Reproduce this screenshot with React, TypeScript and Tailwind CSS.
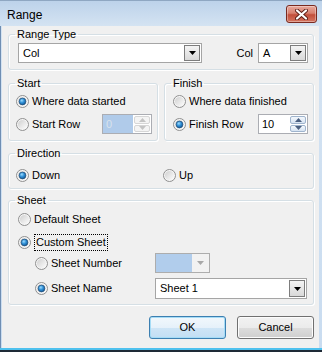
import React from "react";

function Radio({ checked }: { checked?: boolean }) {
  return (
    <svg width="13" height="13" viewBox="0 0 13 13" className="shrink-0">
      <defs>
        <linearGradient id="rbg" x1="0" y1="0" x2="1" y2="1">
          <stop offset="0" stopColor="#cfcfcf" />
          <stop offset="1" stopColor="#fdfdfd" />
        </linearGradient>
        <radialGradient id="rdot" cx="0.4" cy="0.35" r="0.75">
          <stop offset="0" stopColor="#9cdcff" />
          <stop offset="0.45" stopColor="#2f8fd6" />
          <stop offset="1" stopColor="#0b4a86" />
        </radialGradient>
      </defs>
      <circle cx="6.5" cy="6.5" r="6" fill="#f6f6f6" stroke="#8f8f8f" />
      <circle cx="6.5" cy="6.5" r="4.6" fill="url(#rbg)" />
      {checked && <circle cx="6.5" cy="6.5" r="3.4" fill="url(#rdot)" stroke="#244f78" strokeWidth="0.7" />}
    </svg>
  );
}

function Arrow({ disabled }: { disabled?: boolean }) {
  return (
    <svg width="7" height="4" viewBox="0 0 7 4">
      <path d="M0 0H7L3.5 4Z" fill={disabled ? "#a8a8a8" : "#000"} />
    </svg>
  );
}

function Combo({ text, className, disabled }: { text: string; className: string; disabled?: boolean }) {
  return (
    <div className={`flex border ${disabled ? "border-[#adadad] bg-[#f0f0f0]" : "border-[#a5a5a5] bg-white p-[1px]"} ${className}`}>
      <div className={`flex flex-1 items-center pl-[3px] ${disabled ? "bg-[#b1cdec]" : ""}`}>{text}</div>
      {disabled ? (
        <div className="flex w-[17px] items-center justify-center bg-[#f2f2f2]">
          <Arrow disabled />
        </div>
      ) : (
        <div className="flex w-[16px] items-center justify-center border border-[#7d7d7d] bg-[linear-gradient(to_bottom,#f4f4f4,#d9d9d9)]">
          <Arrow />
        </div>
      )}
    </div>
  );
}

function SpinArrow({ up, disabled }: { up?: boolean; disabled?: boolean }) {
  return (
    <svg width="7" height="4" viewBox="0 0 7 4">
      <path d={up ? "M0 4H7L3.5 0Z" : "M0 0H7L3.5 4Z"} fill={disabled ? "#c4c4c4" : "#4a5f80"} />
    </svg>
  );
}

function Spin({ value, disabled }: { value: string; disabled?: boolean }) {
  return (
    <div className="flex h-[20px] w-[50px] border border-[#abadb3] bg-white">
      <div className={`flex flex-1 items-center pl-[3px] ${disabled ? "bg-[#b0cbea] text-[#d9e2ec]" : ""}`}>{value}</div>
      <div className="flex w-[18px] flex-col gap-[1px] p-[1px]">
        <div
          className={`flex flex-1 items-center justify-center rounded-[2px] border ${
            disabled ? "border-[#d6d6d6] bg-[#f4f4f4]" : "border-[#9fb4cd] bg-[linear-gradient(to_bottom,#f4f8fc,#d6e3f2)]"
          }`}
        >
          <SpinArrow up disabled={disabled} />
        </div>
        <div
          className={`flex flex-1 items-center justify-center rounded-[2px] border ${
            disabled ? "border-[#d6d6d6] bg-[#f4f4f4]" : "border-[#9fb4cd] bg-[linear-gradient(to_bottom,#f4f8fc,#d6e3f2)]"
          }`}
        >
          <SpinArrow disabled={disabled} />
        </div>
      </div>
    </div>
  );
}

function Group({
  title,
  className,
  inner,
  children,
}: {
  title: string;
  className: string;
  inner: string;
  children: React.ReactNode;
}) {
  return (
    <fieldset className={`rounded-[3px] border border-[#d5dfe5] shadow-[inset_1px_1px_0_#ffffff,1px_1px_0_#ffffff] ${className}`}>
      <legend className="ml-[6px] px-[2px] leading-[13px]">{title}</legend>
      <div className={inner}>{children}</div>
    </fieldset>
  );
}

function Option({ checked, label, focus }: { checked?: boolean; label: string; focus?: boolean }) {
  return (
    <div className="flex items-center gap-[3px]">
      <Radio checked={checked} />
      <span className={focus ? "border border-dotted border-black px-[1px] leading-[15px]" : ""}>{label}</span>
    </div>
  );
}

export default function App() {
  return (
    <div className="flex h-[352px] w-[322px] flex-col overflow-hidden bg-[linear-gradient(to_bottom,#bcd2ea,#d4e3f2_26px,#c9dcf0)] font-['Liberation_Sans',Arial,sans-serif] text-[11px] leading-[13px] text-black">
      <div className="flex h-[26px] shrink-0 items-start justify-between border-t border-[#8fa7c2] pl-[7px] pr-[5px]">
        <span className="pt-[7px] text-[12px] leading-[14px]">Range</span>
        <div className="mt-[4px] flex h-[18px] w-[31px] items-center justify-center rounded-[3px] border border-[#7a2a20] bg-[linear-gradient(to_bottom,#e7a99d,#d8806f_45%,#c24e3b_55%,#d47560)] shadow-[inset_0_0_0_1px_rgba(255,255,255,0.35)]">
          <svg width="13" height="11" viewBox="0 0 13 11">
            <path d="M2 1.5L11 9.5M11 1.5L2 9.5" stroke="#5a1d16" strokeWidth="4" strokeLinecap="round" />
            <path d="M2 1.5L11 9.5M11 1.5L2 9.5" stroke="#ffffff" strokeWidth="2.2" strokeLinecap="round" />
          </svg>
        </div>
      </div>
      <div className="flex flex-1 border-l border-[#6f8eb3] pl-[1px] pr-[4px]">
        <div className="flex flex-1 flex-col bg-[#f0f0f0] pl-[6px] pr-[5px] pt-[2px]">
          <Group title="Range Type" className="h-[42px] w-[306px] pb-[6px] pt-[2px]" inner="pl-[9px] pr-[5px]">
            <div className="flex h-[20px] items-center justify-between">
              <Combo text="Col" className="h-[20px] w-[184px]" />
              <div className="flex items-center gap-[5px]">
                <span>Col</span>
                <Combo text="A" className="h-[20px] w-[50px]" />
              </div>
            </div>
          </Group>
          <div className="mt-[7px] flex gap-[6px]">
            <Group title="Start" className="h-[64px] w-[150px] pb-[6px] pt-[2px]" inner="pl-[7px] pr-[5px]">
              <div className="flex h-[18px] items-center">
                <Option checked label="Where data started" />
              </div>
              <div className="mt-[4px] flex h-[20px] items-center justify-between">
                <Option label="Start Row" />
                <Spin value="0" disabled />
              </div>
            </Group>
            <Group title="Finish" className="h-[64px] w-[150px] pb-[6px] pt-[2px]" inner="pl-[8px] pr-[5px]">
              <div className="flex h-[18px] items-center">
                <Option label="Where data finished" />
              </div>
              <div className="mt-[4px] flex h-[20px] items-center justify-between">
                <Option checked label="Finish Row" />
                <Spin value="10" />
              </div>
            </Group>
          </div>
          <Group title="Direction" className="mt-[6px] h-[42px] w-[306px] pb-[4px] pt-[6px]" inner="pl-[7px]">
            <div className="flex h-[18px] items-center">
              <div className="w-[147px]">
                <Option checked label="Down" />
              </div>
              <Option label="Up" />
            </div>
          </Group>
          <Group title="Sheet" className="mt-[5px] h-[111px] w-[306px] pb-[6px] pt-[3px]" inner="pl-[9px] pr-[5px]">
            <div className="flex h-[18px] items-center">
              <Option label="Default Sheet" />
            </div>
            <div className="mt-[5px] flex h-[18px] items-center">
              <Option checked label="Custom Sheet" focus />
            </div>
            <div className="mt-[2px] flex h-[20px] items-center pl-[17px]">
              <div className="w-[120px]">
                <Option label="Sheet Number" />
              </div>
              <Combo text="" className="h-[20px] w-[55px]" disabled />
            </div>
            <div className="mt-[5px] flex h-[21px] items-center pl-[17px]">
              <div className="w-[120px]">
                <Option checked label="Sheet Name" />
              </div>
              <Combo text="Sheet 1" className="h-[21px] w-[152px]" />
            </div>
          </Group>
          <div className="mt-[11px] flex justify-end gap-[11px]">
            <button className="flex h-[23px] w-[77px] items-center justify-center rounded-[3px] border border-[#3c7fb1] bg-[linear-gradient(to_bottom,#f2f8fc,#e6f1fa_50%,#cfe5f6_50%,#c2def4)] shadow-[inset_0_0_0_1px_#a6dcf6]">
              OK
            </button>
            <button className="flex h-[23px] w-[77px] items-center justify-center rounded-[3px] border border-[#707070] bg-[linear-gradient(to_bottom,#f2f2f2,#ebebeb_50%,#dddddd_50%,#cfcfcf)] shadow-[inset_0_0_0_1px_#fcfcfc]">
              Cancel
            </button>
          </div>
        </div>
      </div>
      <div className="h-[2px] shrink-0 bg-[#4ec1ee]" />
      <div className="h-[2px] shrink-0 bg-[#1e2a36]" />
    </div>
  );
}
